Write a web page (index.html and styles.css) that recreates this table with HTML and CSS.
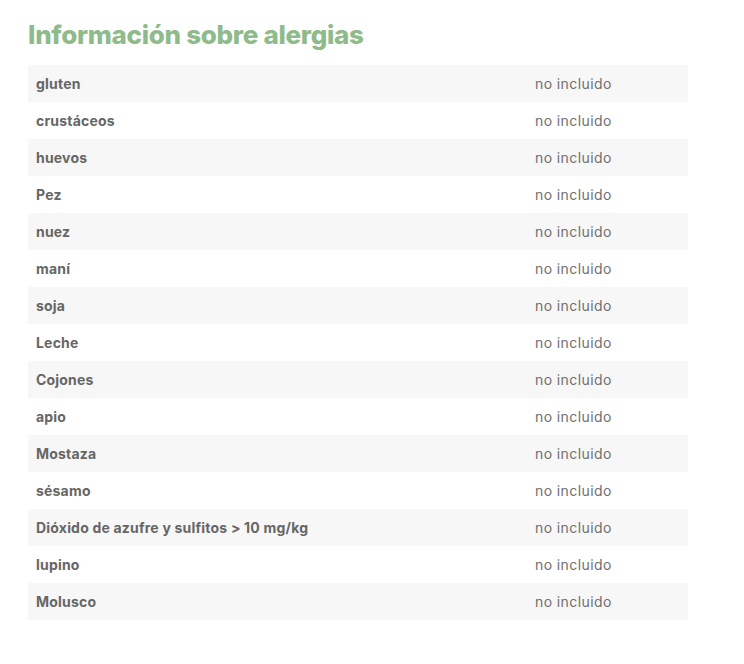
FILE: index.html
```html
<!DOCTYPE html>
<html lang="es">
<head>
<meta charset="utf-8">
<link rel="stylesheet" href="styles.css">
</head>
<body>
<section class="allergy">
  <h2 class="title">Información sobre alergias</h2>
  <div class="table">
    <div class="row"><span class="name">gluten</span><span class="val">no incluido</span></div>
    <div class="row"><span class="name">crustáceos</span><span class="val">no incluido</span></div>
    <div class="row"><span class="name">huevos</span><span class="val">no incluido</span></div>
    <div class="row"><span class="name">Pez</span><span class="val">no incluido</span></div>
    <div class="row"><span class="name">nuez</span><span class="val">no incluido</span></div>
    <div class="row"><span class="name">maní</span><span class="val">no incluido</span></div>
    <div class="row"><span class="name">soja</span><span class="val">no incluido</span></div>
    <div class="row"><span class="name">Leche</span><span class="val">no incluido</span></div>
    <div class="row"><span class="name">Cojones</span><span class="val">no incluido</span></div>
    <div class="row"><span class="name">apio</span><span class="val">no incluido</span></div>
    <div class="row"><span class="name">Mostaza</span><span class="val">no incluido</span></div>
    <div class="row"><span class="name">sésamo</span><span class="val">no incluido</span></div>
    <div class="row"><span class="name">Dióxido de azufre y sulfitos &gt; 10 mg/kg</span><span class="val">no incluido</span></div>
    <div class="row"><span class="name">lupino</span><span class="val">no incluido</span></div>
    <div class="row"><span class="name">Molusco</span><span class="val">no incluido</span></div>
  </div>
</section>
</body>
</html>
```

FILE: styles.css
```css
html, body {
  margin: 0;
  background: #ffffff;
}
body {
  font-family: "Inter", "Open Sans", sans-serif;
}
.allergy {
  padding: 17px 56px 0 28px;
}
.title {
  margin: 0 0 13px 0;
  height: 35px;
  font-size: 26px;
  line-height: 35px;
  font-weight: 800;
  color: #8fbb8a;
  letter-spacing: -0.3px;
}
.table {
  width: 660px;
  display: flex;
  flex-direction: column;
}
.row {
  display: grid;
  grid-template-columns: 499px 1fr;
  height: 37px;
  align-items: center;
  padding-bottom: 1px;
  box-sizing: border-box;
}
.row:nth-child(odd) {
  background: #f7f7f7;
}
.name {
  padding-left: 8px;
  font-size: 14px;
  font-weight: 700;
  color: #666666;
  letter-spacing: 0.2px;
}
.val {
  padding-left: 8px;
  font-size: 14px;
  color: #707070;
  letter-spacing: 0.4px;
}
```
